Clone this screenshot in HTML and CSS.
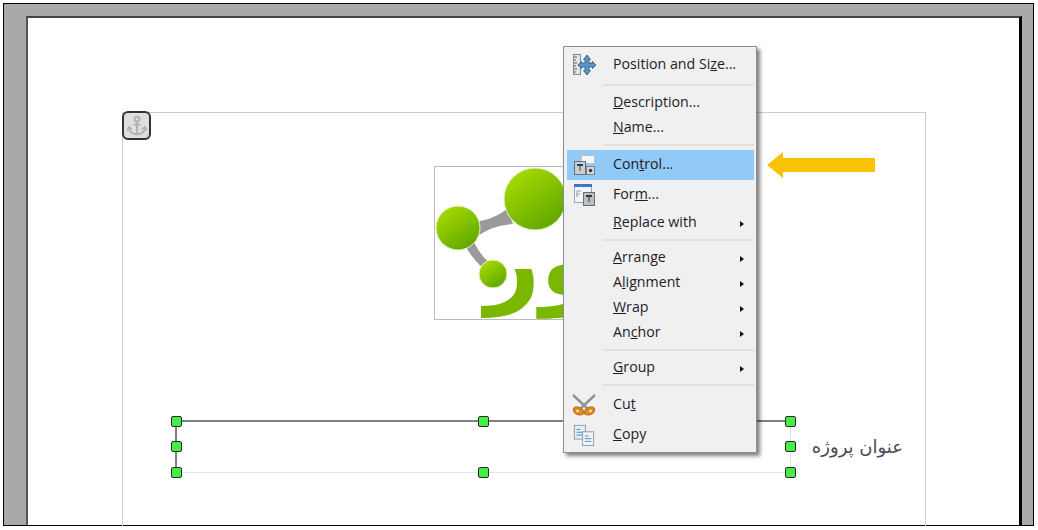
FILE: index.html
```html
<!DOCTYPE html>
<html lang="en">
<head>
  <meta charset="UTF-8" />
  <title>Control menu</title>
  <link rel="stylesheet" href="styles.css">
</head>
<body>

<div class="window">
  <div class="page"></div>
</div>

<!-- objets poses sur la page -->
<div class="margin-frame"></div>

<div class="anchor-box">
  <svg width="22" height="22" viewBox="0 0 24 24" fill="none" stroke="#b0b0b0" stroke-width="2">
    <circle cx="12" cy="4.500" r="2.600"/>
    <path d="M12 7V21M8 10.500H16M3 14C4 19 8 21 12 21C16 21 20 19 21 14"/>
    <path d="M1 17L3.500 12.500L6.500 16M17.500 16L20.500 12.500L23 17" stroke-width="1.500"/>
  </svg>
</div>

<div class="logo">
  <svg width="170" height="153" viewBox="0 0 170 153">
    <defs>
      <linearGradient id="ball" x1="0.2" y1="0.1" x2="0.8" y2="0.95">
        <stop offset="0" stop-color="#a3d800"/>
        <stop offset="1" stop-color="#5fa600"/>
      </linearGradient>
    </defs>
    <path d="M38 55C50 54 62 50 72 42L78 57C64 58 52 62 42 70Z" fill="#9a9a9a"/>
    <path d="M30 78L38 72C42 84 50 92 57 98L50 103C42 96 35 88 30 78Z" fill="#9a9a9a"/>
    <circle cx="100" cy="32" r="31" fill="url(#ball)" stroke="#e6f2c8"/>
    <circle cx="23" cy="61" r="22" fill="url(#ball)" stroke="#e6f2c8"/>
    <circle cx="58" cy="107" r="14" fill="url(#ball)" stroke="#e6f2c8"/>
    <text class="logo-word" x="165" y="128" direction="rtl">ور</text>
  </svg>
</div>

<div class="selection">
  <span class="handle h-tl"></span>
  <span class="handle h-tc"></span>
  <span class="handle h-tr"></span>
  <span class="handle h-ml"></span>
  <span class="handle h-mr"></span>
  <span class="handle h-bl"></span>
  <span class="handle h-bc"></span>
  <span class="handle h-br"></span>
</div>

<div class="project-title" dir="rtl">عنوان پروژه</div>

<div class="context-menu">
  <div class="row tall">
    <span class="icon">
      <svg width="24" height="24" viewBox="0 0 24 24">
        <rect x="1.500" y="1.500" width="7" height="20" fill="#dfe3e6" stroke="#7f8a94"/>
        <path d="M2 4H5M2 7H4M2 10H5M2 13H4M2 16H5M2 19H4" stroke="#5d6770"/>
        <path d="M15 2L18.500 6.500H17V10H20.500V8.500L24 12L20.500 15.500V14H17V17.500H18.500L15 22L11.500 17.500H13V14H9.500V15.500L6 12L9.500 8.500V10H13V6.500H11.500Z" fill="#5b94c4" stroke="#2b5578" stroke-width="0.800"/>
      </svg>
    </span>
    <span class="label">Position and Si<u>z</u>e...</span>
  </div>
  <div class="sep"></div>
  <div class="row"><span class="icon"></span><span class="label"><u>D</u>escription...</span></div>
  <div class="row"><span class="icon"></span><span class="label"><u>N</u>ame...</span></div>
  <div class="sep"></div>
  <div class="row tall active">
    <span class="icon">
      <svg width="24" height="24" viewBox="0 0 24 24">
        <rect x="9.500" y="2.500" width="13" height="8" fill="#f4f7fa" stroke="#b9c2ca"/>
        <rect x="2.500" y="8.500" width="11" height="13" fill="#c9ced3" stroke="#69727a"/>
        <rect x="14.500" y="13.500" width="8" height="8" fill="#d5dade" stroke="#7b848c"/>
        <circle cx="18.500" cy="17.500" r="1.800" fill="#333c44"/>
        <path d="M5 11H11V13H8.500V18H7.500V13H5Z" fill="#39424a"/>
      </svg>
    </span>
    <span class="label">Con<u>t</u>rol...</span>
  </div>
  <div class="row tall">
    <span class="icon">
      <svg width="24" height="24" viewBox="0 0 24 24">
        <rect x="2.500" y="2.500" width="17" height="17" fill="#f2f5f8" stroke="#9aa5ae"/>
        <rect x="2" y="1" width="18" height="3" fill="#3c78c8"/>
        <path d="M5 8H9M5 8V14M5 11H8" stroke="#98a2aa" stroke-width="1.200" fill="none"/>
        <rect x="11.500" y="9.500" width="11" height="13" fill="#b9bfc5" stroke="#666f77"/>
        <path d="M14 12H20V14H17.500V19H16.500V14H14Z" fill="#2f383f"/>
      </svg>
    </span>
    <span class="label">For<u>m</u>...</span>
  </div>
  <div class="row"><span class="icon"></span><span class="label"><u>R</u>eplace with</span><span class="arrow"></span></div>
  <div class="sep"></div>
  <div class="row"><span class="icon"></span><span class="label"><u>A</u>rrange</span><span class="arrow"></span></div>
  <div class="row"><span class="icon"></span><span class="label">A<u>l</u>ignment</span><span class="arrow"></span></div>
  <div class="row"><span class="icon"></span><span class="label"><u>W</u>rap</span><span class="arrow"></span></div>
  <div class="row"><span class="icon"></span><span class="label">An<u>c</u>hor</span><span class="arrow"></span></div>
  <div class="sep"></div>
  <div class="row"><span class="icon"></span><span class="label"><u>G</u>roup</span><span class="arrow"></span></div>
  <div class="sep"></div>
  <div class="row tall">
    <span class="icon">
      <svg width="24" height="24" viewBox="0 0 24 24" fill="none">
        <path d="M1 2L15 15M23 2L9 15" stroke="#8d9499" stroke-width="2.500"/>
        <ellipse cx="6.500" cy="18" rx="5.500" ry="3.600" transform="rotate(25 6.500 18)" fill="#e08a1e" stroke="#b8620f"/>
        <ellipse cx="17.500" cy="18" rx="5.500" ry="3.600" transform="rotate(-25 17.500 18)" fill="#e08a1e" stroke="#b8620f"/>
        <circle cx="5.500" cy="18" r="1.300" fill="#f0f0f0"/>
        <circle cx="18.500" cy="18" r="1.300" fill="#f0f0f0"/>
      </svg>
    </span>
    <span class="label">Cu<u>t</u></span>
  </div>
  <div class="row tall">
    <span class="icon">
      <svg width="22" height="22" viewBox="0 0 24 24">
        <rect x="1.500" y="1.500" width="12" height="15" fill="#e6edf3" stroke="#8d99a3"/>
        <path d="M4 6H8M4 9H11M4 12H11" stroke="#3f86c6"/>
        <rect x="10.500" y="8.500" width="12" height="15" fill="#f1f5f8" stroke="#8d99a3"/>
        <path d="M13 13H17M13 16H20M13 19H20" stroke="#3f86c6"/>
      </svg>
    </span>
    <span class="label"><u>C</u>opy</span>
  </div>
</div>

<svg class="pointer" width="108" height="26" viewBox="0 0 108 26">
  <path d="M0 13L16 0V6H108V20H16V26Z" fill="#f9c206"/>
</svg>

</body>
</html>
```

FILE: styles.css
```css
body {
  margin: 0;
  width: 1038px;
  height: 530px;
  position: relative;
  overflow: hidden;
  background: #fff;
  font-family: "Open Sans", "Noto Sans", sans-serif;
}

.window {
  box-sizing: border-box;
  display: flex;
  width: 1031px;
  height: 523px;
  margin: 3px 0 0 3px;
  padding: 12px 11px 0 22px;
  background: #a9a9a9;
  border: 1px solid #000;
}

.page {
  flex: 1;
  background: #fff;
  border-top: 2px solid #444;
  border-left: 2px solid #555;
  border-right: 3px solid #000;
}

.margin-frame {
  position: absolute;
  left: 122px;
  top: 112px;
  width: 802px;
  height: 413px;
  border: 1px solid #ccc;
  border-bottom: none;
}

.anchor-box {
  position: absolute;
  left: 122px;
  top: 111px;
  box-sizing: border-box;
  width: 29px;
  height: 29px;
  display: flex;
  align-items: center;
  justify-content: center;
  background: #dedede;
  border: 2px solid #333;
  border-radius: 6px;
}

.logo {
  position: absolute;
  left: 434px;
  top: 166px;
  box-sizing: border-box;
  width: 135px;
  height: 154px;
  border: 1px solid #bbb;
}

.logo svg {
  display: block;
  overflow: visible;
}

.logo-word {
  font-family: "DejaVu Sans", sans-serif;
  font-weight: bold;
  font-size: 96px;
  fill: #7ab800;
}

/* cadre selectionne */
.selection {
  position: absolute;
  left: 175px;
  top: 420px;
  box-sizing: border-box;
  width: 616px;
  height: 53px;
  border-top: 2px solid #808080;
  border-left: 2px solid #808080;
  border-right: 1px solid #e4e4e4;
  border-bottom: 1px solid #e4e4e4;
}

.handle {
  position: absolute;
  box-sizing: border-box;
  width: 11px;
  height: 11px;
  background: #44ee44;
  border: 1px solid #2b2b2b;
  border-radius: 2px;
}

.h-tl { left: -6px; top: -6px; }
.h-tc { left: 301px; top: -6px; }
.h-tr { right: -6px; top: -6px; }
.h-ml { left: -6px; top: 19px; }
.h-mr { right: -6px; top: 19px; }
.h-bl { left: -6px; bottom: -6px; }
.h-bc { left: 301px; bottom: -6px; }
.h-br { right: -6px; bottom: -6px; }

.project-title {
  position: absolute;
  left: 808px;
  top: 433px;
  width: 95px;
  font-family: "DejaVu Sans", sans-serif;
  font-size: 18px;
  line-height: 28px;
  white-space: nowrap;
  color: #4a4a55;
}

.context-menu {
  position: absolute;
  left: 563px;
  top: 46px;
  box-sizing: border-box;
  width: 194px;
  padding: 3px 2px 2px 3px;
  background: #f0f0f0;
  border: 1px solid #8e8e8e;
  box-shadow: 3px 3px 4px rgba(0, 0, 0, 0.5);
  color: #1c1c28;
  font-size: 14.2px;
}

.row {
  display: flex;
  align-items: center;
  height: 25px;
}

.row.tall {
  height: 30px;
}

.row.active {
  background: #91c9f7;
}

.icon {
  width: 36px;
  flex: none;
  display: flex;
  justify-content: center;
  padding-right: 2px;
  box-sizing: border-box;
}

.label {
  flex: 1;
  padding-left: 10px;
  padding-bottom: 2px;
  line-height: 18px;
  white-space: nowrap;
}

.arrow {
  width: 0;
  height: 0;
  margin: 3px 10px 0 0;
  border-left: 4px solid #111;
  border-top: 3px solid transparent;
  border-bottom: 3px solid transparent;
}

.sep {
  height: 2px;
  margin: 4px 0 4px 36px;
  background: #e0e0e0;
}

.pointer {
  position: absolute;
  left: 767px;
  top: 152px;
}
```
